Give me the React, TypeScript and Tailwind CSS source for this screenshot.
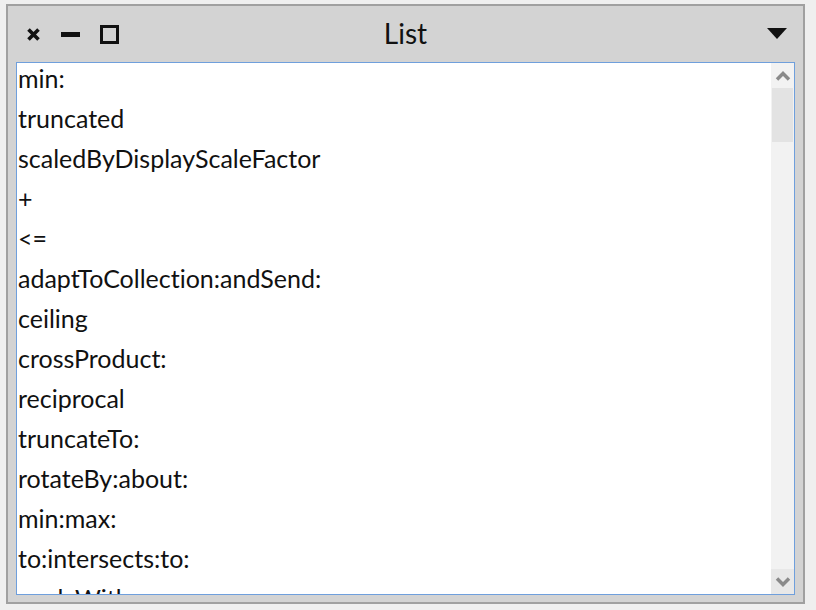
const items = [
  'min:',
  'truncated',
  'scaledByDisplayScaleFactor',
  '+',
  '<=',
  'adaptToCollection:andSend:',
  'ceiling',
  'crossProduct:',
  'reciprocal',
  'truncateTo:',
  'rotateBy:about:',
  'min:max:',
  'to:intersects:to:',
  'angleWith:',
];

export default function App() {
  return (
    <div className="w-[816px] h-[610px] bg-[#efefef] pt-[4px] pl-[6px] font-['Lato',sans-serif] [font-variant-ligatures:none]">
      <div className="w-[799px] h-[600px] border-2 border-[#a0a0a0] bg-[#d3d3d3] flex flex-col">
        {/* title bar */}
        <div className="h-[56px] flex items-center relative shrink-0">
          <div className="flex items-center pl-[18px] gap-[20px]">
            <svg width="15" height="15" viewBox="0 0 15 15">
              <path d="M2.5 2.5L12.5 12.5M12.5 2.5L2.5 12.5" stroke="#111" strokeWidth="3.6" />
            </svg>
            <div className="w-[19px] h-[5px] bg-[#111]" />
            <div className="w-[19px] h-[19px] border-[3px] border-[#111]" />
          </div>
          <div className="absolute inset-0 flex items-center justify-center text-[28px] text-[#111] pb-[2px]">
            List
          </div>
          <div className="ml-auto pr-[16px]">
            <svg width="20" height="12" viewBox="0 0 20 12">
              <path d="M0 0H20L10 11Z" fill="#111" />
            </svg>
          </div>
        </div>
        {/* list */}
        <div className="mx-[8px] flex-1 mb-[7px] border border-[#6f9fdc] bg-white flex overflow-hidden">
          <div className="flex-1 overflow-hidden">
            <div className="mt-[-4px]">
              {items.map((it) => (
                <div key={it} className="h-[40px] flex items-center pl-[1px] text-[25px] text-[#111] whitespace-nowrap">
                  {it}
                </div>
              ))}
            </div>
          </div>
          <div className="w-[23px] bg-[#f2f2f2] flex flex-col">
            <div className="h-[25px] flex items-center justify-center">
              <svg width="16" height="10" viewBox="0 0 16 10">
                <path d="M2 8.5L8 2.5L14 8.5" stroke="#8a8a8a" strokeWidth="3.5" fill="none" />
              </svg>
            </div>
            <div className="h-[54px] mx-[1px] bg-[#e3e3e3]" />
            <div className="flex-1" />
            <div className="h-[25px] bg-[#e8e8e8] flex items-center justify-center">
              <svg width="16" height="10" viewBox="0 0 16 10">
                <path d="M2 1.5L8 7.5L14 1.5" stroke="#8a8a8a" strokeWidth="3.5" fill="none" />
              </svg>
            </div>
          </div>
        </div>
      </div>
    </div>
  );
}
